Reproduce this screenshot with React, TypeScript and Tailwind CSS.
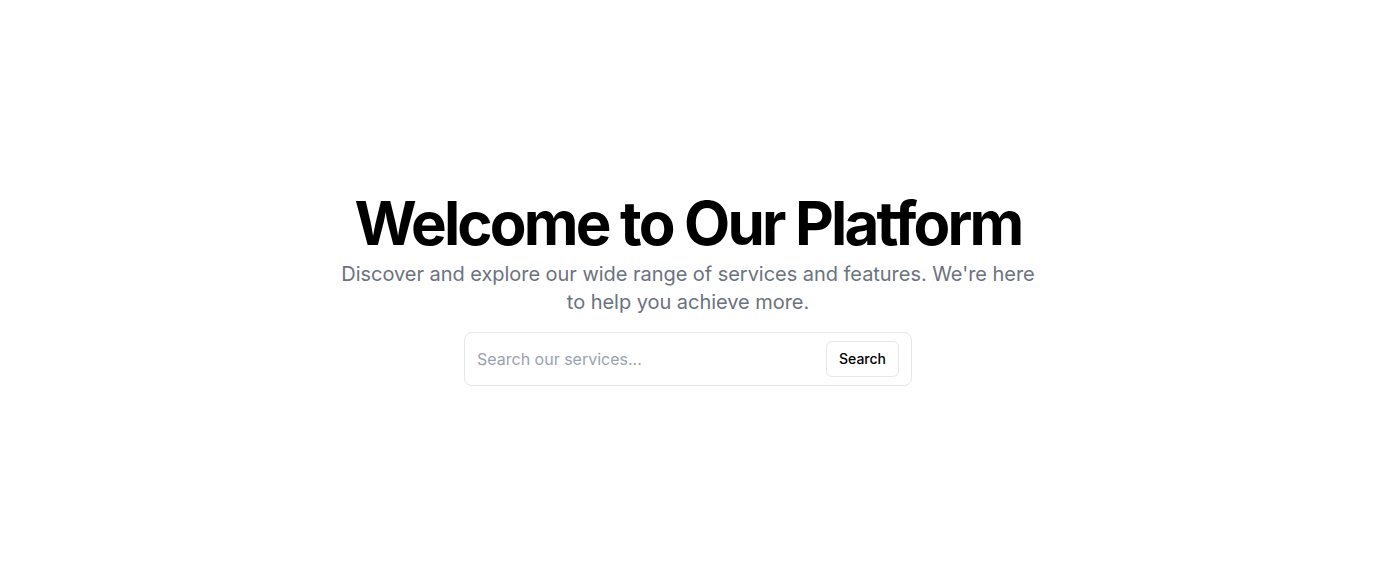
export default function App() {
  return (
    <div className="flex min-h-screen items-center justify-center bg-white px-4 font-['Inter',sans-serif]">
      <div className="flex flex-col items-center text-center">
        <h1 className="text-[60px] font-bold leading-[60px] tracking-[-0.047em] text-black">
          Welcome to Our Platform
        </h1>
        <p className="mt-[7px] max-w-[700px] text-xl leading-7 tracking-[-0.002em] text-[#6b7280]">
          Discover and explore our wide range of services and features. We're here to help you
          achieve more.
        </p>
        <form
          className="mt-4 flex w-[448px] items-center gap-2 rounded-lg border border-gray-200 bg-white px-3 py-2"
          onSubmit={(e) => e.preventDefault()}
        >
          <input
            type="text"
            placeholder="Search our services..."
            className="min-w-0 flex-1 bg-transparent text-base text-gray-900 outline-none placeholder:text-gray-400"
          />
          <button
            type="submit"
            className="h-9 rounded-md border border-gray-200 bg-white px-3 text-sm font-medium text-black"
          >
            Search
          </button>
        </form>
      </div>
    </div>
  );
}
